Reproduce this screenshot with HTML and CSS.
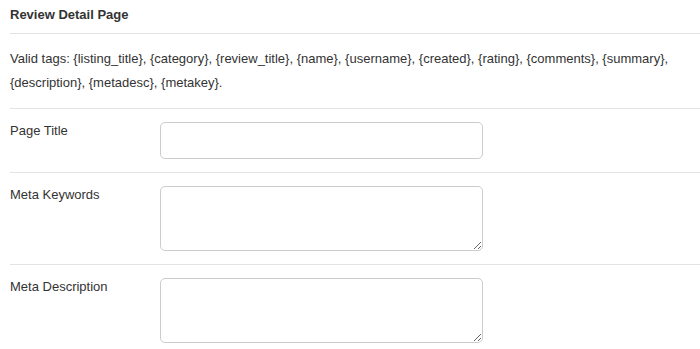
FILE: index.html
```html
<!DOCTYPE html>
<html lang="en">
<head>
  <meta charset="UTF-8">
  <title>Review Detail Page</title>
  <link rel="stylesheet" href="styles.css">
</head>
<body>
  <div class="panel">
    <h4 class="panel-title">Review Detail Page</h4>
    <p class="tags">Valid tags: {listing_title}, {category}, {review_title}, {name}, {username}, {created}, {rating}, {comments}, {summary}, {description}, {metadesc}, {metakey}.</p>

    <div class="row">
      <label class="row-label" for="page-title">Page Title</label>
      <input class="field" id="page-title" type="text">
    </div>
    <div class="row">
      <label class="row-label" for="meta-keywords">Meta Keywords</label>
      <textarea class="field area" id="meta-keywords"></textarea>
    </div>
    <div class="row">
      <label class="row-label" for="meta-desc">Meta Description</label>
      <textarea class="field area" id="meta-desc"></textarea>
    </div>
  </div>
</body>
</html>
```

FILE: styles.css
```css
body {
  margin: 0;
  background: #fff;
  font-family: "Liberation Sans", Arial, sans-serif;
  font-size: 13px;
  color: #333;
}

.panel {
  padding-left: 10px;
}

.panel-title {
  margin: 0;
  padding: 6px 0 9px;
  font-size: 13px;
  line-height: 18px;
  font-weight: bold;
  border-bottom: 1px solid #e3e3e3;
}

.tags {
  margin: 0;
  padding: 13px 0;
  line-height: 24px;
  border-bottom: 1px solid #e3e3e3;
}

.row {
  display: flex;
  align-items: flex-start;
  padding: 13px 0;
  border-bottom: 1px solid #e3e3e3;
}

.row:last-child {
  border-bottom: none;
}

.row-label {
  width: 150px;
  line-height: 18px;
}

.field {
  box-sizing: border-box;
  width: 323px;
  height: 37px;
  margin: 0;
  border: 1px solid #ccc;
  border-radius: 5px;
  background: #fff;
  font-family: inherit;
  font-size: 13px;
  outline: none;
}

.area {
  height: 65px;
  resize: vertical;
}
```
